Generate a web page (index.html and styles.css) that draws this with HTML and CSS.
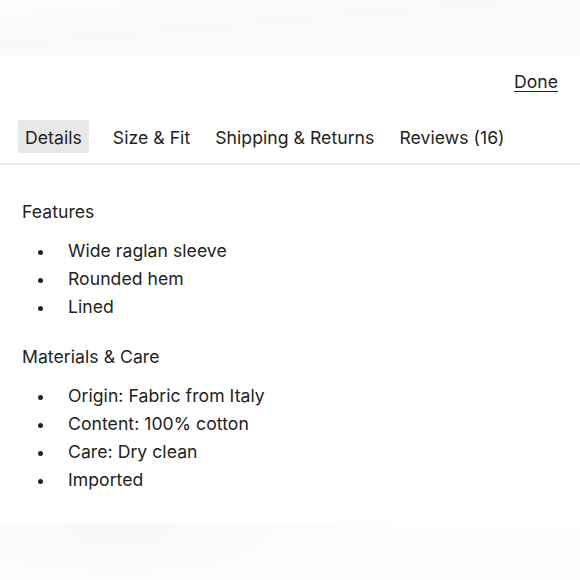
FILE: index.html
```html
<!DOCTYPE html>
<html>
<head>
<meta charset="utf-8">
<link rel="stylesheet" href="styles.css">
</head>
<body>
<div class="page">
  <div class="topband"></div>
  <div class="header"><a class="done" href="#">Done</a></div>
  <nav class="tabs">
    <span class="tab active">Details</span>
    <span class="tab">Size &amp; Fit</span>
    <span class="tab">Shipping &amp; Returns</span>
    <span class="tab">Reviews (16)</span>
  </nav>
  <div class="content">
    <h2 class="heading">Features</h2>
    <ul class="list">
      <li>Wide raglan sleeve</li>
      <li>Rounded hem</li>
      <li>Lined</li>
    </ul>
    <h2 class="heading second">Materials &amp; Care</h2>
    <ul class="list">
      <li>Origin: Fabric from Italy</li>
      <li>Content: 100% cotton</li>
      <li>Care: Dry clean</li>
      <li>Imported</li>
    </ul>
  </div>
  <div class="bottomband"></div>
</div>
</body>
</html>
```

FILE: styles.css
```css
* { box-sizing: border-box; }
html, body { margin: 0; padding: 0; background: #fff; }
body {
  font-family: Inter, "Noto Sans", sans-serif;
  color: #222;
  font-size: 17.6px;
  letter-spacing: 0.05px;
}
.page { width: 580px; height: 580px; overflow: hidden; display: flex; flex-direction: column; }
.topband {
  height: 56px;
  flex: none;
  background: linear-gradient(175deg, #fdfdfd 0%, #f9f9f9 40%, #fbfbfb 100%);
}
.header {
  height: 50px;
  display: flex;
  justify-content: flex-end;
  align-items: center;
  padding: 0 22px 0 0;
  flex: none;
}
.done {
  color: #222;
  text-decoration: underline;
  text-underline-offset: 3px;
  text-decoration-thickness: 1px;
  line-height: 22px;
  margin-top: 1px;
}
.tabs {
  display: flex;
  align-items: center;
  gap: 13px;
  margin: 14px 0 0 18px;
  height: 33px;
  flex: none;
}
.tab {
  padding: 0 6px;
  height: 33px;
  line-height: 35px;
  white-space: nowrap;
}
.tab.active { background: #e8e8e8; padding: 0 7px; margin-right: 5px; }
.content {
  border-top: 2px solid #ebebeb;
  margin-top: 10px;
  padding: 33px 22px 0 22px;
  flex: none;
}
.heading {
  margin: 0;
  font-weight: 400;
  font-size: 17.6px;
  line-height: 28px;
}
.heading.second { margin-top: 22px; }
.list {
  list-style: none;
  margin: 11px 0 0 0;
  padding: 0;
}
.list li {
  display: flex;
  align-items: center;
  height: 28px;
  line-height: 28px;
}
.list li::before {
  content: "";
  width: 5px;
  height: 5px;
  border-radius: 50%;
  background: #222;
  margin: 2px 25px 0 16px;
  flex: none;
}
.bottomband {
  flex: 1;
  margin-top: 29px;
  background: radial-gradient(ellipse 300px 80px at 120px 10px, #f8f8f8 0%, #fcfcfc 55%, #fefefe 100%);
}
```
